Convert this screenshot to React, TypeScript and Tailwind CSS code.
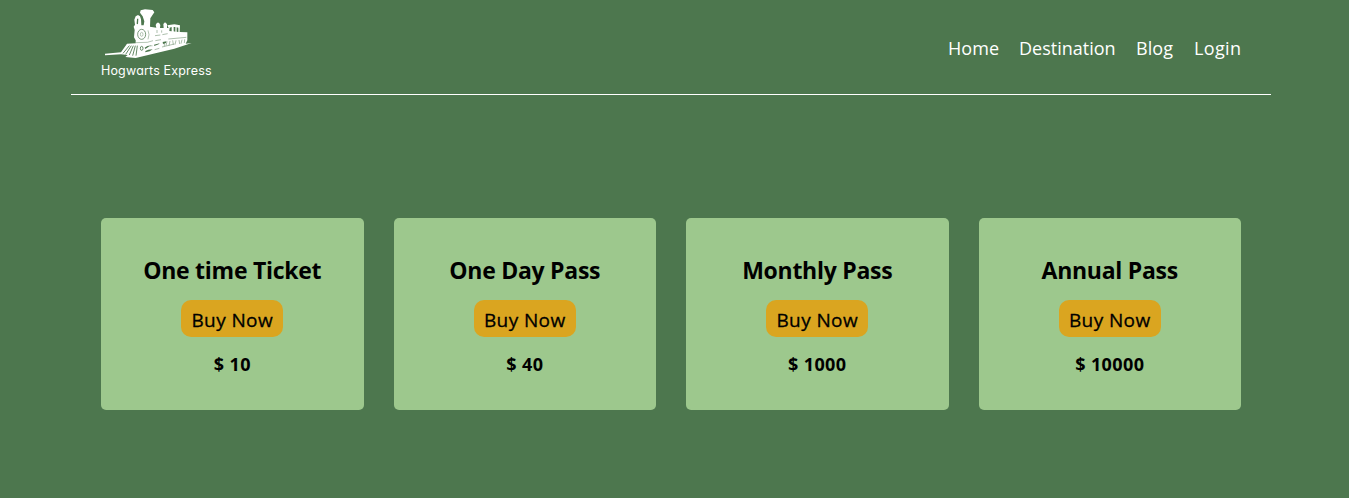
const passes = [
  { name: "One time Ticket", price: "$ 10" },
  { name: "One Day Pass", price: "$ 40" },
  { name: "Monthly Pass", price: "$ 1000" },
  { name: "Annual Pass", price: "$ 10000" },
];

const links = [
  { label: "Home", width: "w-[51px]", tracking: "tracking-[0.05px]" },
  { label: "Destination", width: "w-[97px]", tracking: "tracking-[0px]" },
  { label: "Blog", width: "w-[38px]", tracking: "tracking-[0.1px]" },
  { label: "Login", width: "w-[47px]", tracking: "tracking-[0.35px]" },
];

function Train() {
  return (
    <svg viewBox="18 24 330 156" className="block h-[52px] w-[110px]" fill="none" aria-hidden="true">
      <path
        fill="#fff"
        d="M30 161L78 157L96 131L122 130L122 121L117 112L119 90L116 80L120 74L118 59L122 49L129 45L135 49L138 58L139 76L146 76L148 64L143 49L135 38L137 31L150 28L173 30L178 37L166 55L165 80L184 83L182 75L186 68L192 68L196 75L195 84L206 84L205 72L210 67L216 72L216 84L221 84L217 76L238 73L255 76L254 96L277 97L277 121L272 131L290 129L238 146L175 161L122 174L91 171L98 165L78 163L30 166Z"
      />
      <g fill="#4d774e">
        <path d="M224 83L230 81L230 94L223 93ZM236 81L241 81L241 95L236 94ZM245 82L250 83L250 96L245 95Z" />
        <path d="M149 143Q161 133 175 138L163 139L151 147ZM151 153L160 149L173 148L164 154L151 157ZM177 134L194 130L191 133L178 138ZM203 126L214 124L213 129L204 132Z" />
        <path d="M126 56L130 56L129 73L125 71Z" />
      </g>
      <g stroke="#4d774e" strokeWidth="2.6">
        <path d="M103 137L84 160M109 137L92 163M115 137L103 165M121 137L113 167M127 137L123 167" />
        <ellipse cx="140" cy="103" rx="12" ry="15" strokeWidth="2.6" strokeOpacity=".85" />
        <ellipse cx="140" cy="145" rx="4" ry="6" />
        <path d="M159 91Q165 103 159 118M122 128L157 127L174 122" strokeWidth="1.8" strokeOpacity=".7" />
      </g>
      <g stroke="#4d774e" strokeWidth="2" strokeOpacity=".7">
        <path d="M180 107L196 105M202 104L218 101M186 90L186 99M200 91L200 98M220 117L274 112M181 122L198 119" />
        <path d="M208 126L208 139M216 124L213 137M225 123L222 137M233 121L235 134M243 121L240 134M252 120L254 132M261 119L258 131M269 118L268 129" />
        <path d="M201 141L238 132M179 149L193 145" />
      </g>
      <ellipse cx="140" cy="103" rx="4" ry="6" stroke="#4d774e" strokeWidth="2" strokeOpacity=".6" />
    </svg>
  );
}

export default function App() {
  return (
    <main className="min-h-screen overflow-hidden bg-[#4d774e] font-['Open_Sans',sans-serif]">
      <div className="ml-[71px] w-[1200px]">
        <header className="flex h-[95px] items-center justify-between border-b border-white px-[30px]">
          <div className="flex h-full w-[116px] flex-col pt-[8px]">
            <Train />
            <span className="mt-px whitespace-nowrap font-['Inter',sans-serif] text-[12.5px] leading-[20px] tracking-[0.17px] text-white [font-feature-settings:'cv11']">
              Hogwarts Express
            </span>
          </div>
          <nav className="flex gap-5 pt-[2px] text-[18px] leading-6 text-white">
            {links.map((link) => (
              <a key={link.label} href="#" className={`whitespace-nowrap ${link.width} ${link.tracking}`}>
                {link.label}
              </a>
            ))}
          </nav>
        </header>
        <section className="mt-[123px] grid grid-cols-4 gap-[30px] px-[30px] text-center text-black">
          {passes.map((pass) => (
            <article key={pass.name} className="flex h-[192px] flex-col items-center rounded-[5px] bg-[#9dc88d] pt-[36px]">
              <h2 className="text-[23px] font-bold leading-8 tracking-[-0.27px]">{pass.name}</h2>
              <button className="mt-[14px] h-[37px] w-[102px] rounded-[10px] bg-[#daa520] pt-[3px] text-[19px] font-medium leading-[26px] tracking-[0.4px] [-webkit-text-stroke:0.3px_black]">
                Buy Now
              </button>
              <p className="mt-[15px] text-[18px] font-bold leading-6 tracking-[0.4px]">{pass.price}</p>
            </article>
          ))}
        </section>
      </div>
    </main>
  );
}
